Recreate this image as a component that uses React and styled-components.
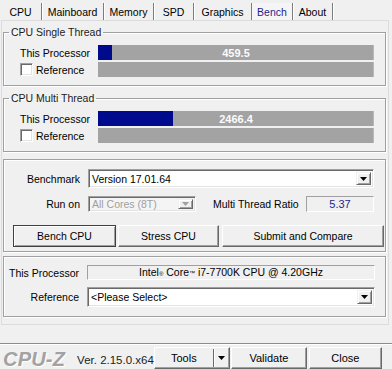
import React from "react";
import styled, { createGlobalStyle, css } from "styled-components";

const GlobalStyle = createGlobalStyle`
  html, body { margin: 0; padding: 0; background: #f0f0f0; }
  body {
    font-family: "Liberation Sans", Arial, sans-serif;
    font-size: 10.5px;
    color: #000;
  }
`;

const BAR_MAX = 9070;

const tabs = [
  { name: "CPU", w: 42 },
  { name: "Mainboard", w: 62 },
  { name: "Memory", w: 50 },
  { name: "SPD", w: 40 },
  { name: "Graphics", w: 58 },
  { name: "Bench", w: 41, active: true },
  { name: "About", w: 40 },
];

const Window = styled.div`
  width: 392px;
  height: 369px;
  overflow: hidden;
  display: flex;
  flex-direction: column;
  background: #f0f0f0;
`;

const TabStrip = styled.div`
  display: flex;
  height: 20px;
  flex-shrink: 0;
`;

const Tab = styled.div`
  width: ${(p) => p.$w}px;
  box-sizing: border-box;
  margin-top: 3px;
  padding-top: 3px;
  line-height: 13px;
  text-align: center;
  border-right: 1px solid #7d7d7d;
  box-shadow: 1px 0 0 #fff;
  color: ${(p) => (p.$active ? "#1d1d8c" : "#000")};
  background: ${(p) => (p.$active ? "#f5f5f5" : "transparent")};
`;

const Panel = styled.div`
  margin: 0 3px 0 1px;
  padding: 0 2px 7px 1px;
  border: 1px solid #dcdcdc;
  flex-shrink: 0;
`;

const boxLook = css`
  border: 1px solid #a0a0a0;
  box-shadow: inset 1px 1px 0 #fff, 1px 1px 0 #fff;
`;

const Group = styled.fieldset`
  ${boxLook};
  margin: ${(p) => p.$mt}px 0 0 0;
  padding: 7px 11px 8px 5px;
  min-width: 0;
`;

const Legend = styled.legend`
  padding: 0 2px;
  line-height: 12px;
  color: #1a1a1a;
`;

const Frame = styled.div`
  ${boxLook};
  margin-top: ${(p) => p.$mt}px;
  padding: ${(p) => p.$pad};
`;

const BarRows = styled.div`
  display: flex;
  flex-direction: column;
  gap: 2px;
  padding-left: 11px;
`;

const BarRow = styled.div`
  display: flex;
  align-items: center;
  height: 15px;
`;

const RowLabel = styled.div`
  width: 78px;
  flex-shrink: 0;
  display: flex;
  align-items: center;
`;

const Checkbox = styled.span`
  width: 13px;
  height: 13px;
  box-sizing: border-box;
  margin-right: 3px;
  background: #fff;
  border: 1px solid;
  border-color: #a0a0a0 #fff #fff #a0a0a0;
  box-shadow: inset 1px 1px 0 #696969, inset -1px -1px 0 #e3e3e3;
`;

const Bar = styled.div`
  flex: 1;
  height: 15px;
  position: relative;
  background: #a3a3a3;
  box-shadow: inset -1px 0 0 #b9b9b9;
  display: flex;
  align-items: center;
  justify-content: center;
`;

const BarFill = styled.div`
  position: absolute;
  left: 0;
  top: 0;
  bottom: 0;
  background: #000a8c;
`;

const BarValue = styled.span`
  position: relative;
  color: #fbfbfb;
  font-weight: bold;
  font-size: 11px;
`;

const FormRow = styled.div`
  display: flex;
  align-items: center;
  margin-top: ${(p) => p.$mt || 0}px;
`;

const FormLabel = styled.div`
  width: ${(p) => p.$w}px;
  flex-shrink: 0;
  text-align: right;
  margin-right: 8px;
`;

const Combo = styled.div`
  display: flex;
  align-items: center;
  box-sizing: border-box;
  width: ${(p) => (p.$w ? `${p.$w}px` : "auto")};
  flex: ${(p) => (p.$w ? "none" : "1")};
  height: ${(p) => p.$h}px;
  background: ${(p) => (p.$disabled ? "#f4f4f4" : "#fff")};
  color: ${(p) => (p.$disabled ? "#a0a0a0" : "#000")};
  border: 1px solid;
  border-color: #a0a0a0 #fff #fff #a0a0a0;
  box-shadow: inset 1px 1px 0 #696969, inset -1px -1px 0 #e3e3e3;
  padding: 2px 2px 2px 3px;
`;

const ComboText = styled.span`
  flex: 1;
  white-space: nowrap;
`;

const DropButton = styled.span`
  width: 15px;
  height: 100%;
  box-sizing: border-box;
  display: flex;
  align-items: center;
  justify-content: center;
  background: #f0f0f0;
  border: 1px solid;
  border-color: #f0f0f0 #696969 #696969 #f0f0f0;
  box-shadow: inset 1px 1px 0 #fff, inset -1px -1px 0 #a0a0a0;
`;

const Field = styled.div`
  box-sizing: border-box;
  width: ${(p) => (p.$w ? `${p.$w}px` : "auto")};
  flex: ${(p) => (p.$w ? "none" : "1")};
  height: ${(p) => p.$h}px;
  line-height: ${(p) => p.$h - 2}px;
  text-align: center;
  color: ${(p) => p.$color || "#000"};
  font-size: ${(p) => p.$fs || 10.5}px;
  background: #f0f0f0;
  border: 1px solid;
  border-color: #a0a0a0 #fff #fff #a0a0a0;
  white-space: nowrap;
`;

const Tiny = styled.span`
  font-size: 6px;
  vertical-align: ${(p) => p.$va};
`;

const RatioLabel = styled.div`
  margin-left: 17px;
  width: 93px;
`;

const ButtonRow = styled.div`
  display: flex;
  margin-top: ${(p) => p.$mt || 0}px;
  margin-left: ${(p) => p.$ml || 0}px;
  margin-right: ${(p) => p.$mr || 0}px;
`;

const Button = styled.button`
  font: inherit;
  font-size: ${(p) => p.$fs || 10.5}px;
  color: #000;
  width: ${(p) => p.$w}px;
  height: 22px;
  margin-left: ${(p) => p.$gap || 0}px;
  padding: 0;
  box-sizing: border-box;
  background: #f0f0f0;
  border: 1px solid;
  border-color: ${(p) => (p.$default ? "#404040" : "#fff #696969 #696969 #fff")};
  box-shadow: ${(p) =>
    p.$default
      ? "inset 1px 1px 0 #fff, inset -1px -1px 0 #a0a0a0"
      : "inset -1px -1px 0 #a0a0a0"};
  display: flex;
  align-items: center;
  justify-content: center;
`;

const SplitText = styled.span`
  flex: 1;
  text-align: center;
  border-right: 1px solid #696969;
  box-shadow: 1px 0 0 #fff;
  line-height: 18px;
`;

const SplitArrow = styled.span`
  width: 15px;
  display: flex;
  justify-content: center;
`;

const Footer = styled.div`
  margin-top: auto;
  height: 26px;
  box-sizing: border-box;
  flex-shrink: 0;
  border-top: 1px solid #8c8c8c;
  box-shadow: inset 0 1px 0 #fff;
  display: flex;
  align-items: flex-start;
`;

const Logo = styled.div`
  margin: 5px 0 0 3px;
  font-size: 20px;
  line-height: 20px;
  font-weight: bold;
  font-style: italic;
  color: #a2a2a2;
  text-shadow: 1px 1px 0 #fff;
  letter-spacing: 0.2px;
`;

const Version = styled.div`
  margin: 10px 0 0 12px;
  font-size: 11.5px;
  line-height: 13px;
  color: #222;
`;

function Arrow({ color = "#000" }) {
  return (
    <svg width="7" height="4" viewBox="0 0 7 4">
      <path d="M0 0h7L3.5 4z" fill={color} />
    </svg>
  );
}

function ScoreBox({ title, mt, value }) {
  return (
    <Group $mt={mt}>
      <Legend>{title}</Legend>
      <BarRows>
        <BarRow>
          <RowLabel>This Processor</RowLabel>
          <Bar>
            <BarFill style={{ width: `${(value / BAR_MAX) * 100}%` }} />
            <BarValue>{value.toFixed(1)}</BarValue>
          </Bar>
        </BarRow>
        <BarRow>
          <RowLabel>
            <Checkbox />
            Reference
          </RowLabel>
          <Bar />
        </BarRow>
      </BarRows>
    </Group>
  );
}

export default function App() {
  return (
    <Window>
      <GlobalStyle />
      <TabStrip>
        {tabs.map((t) => (
          <Tab key={t.name} $w={t.w} $active={t.active}>
            {t.name}
          </Tab>
        ))}
      </TabStrip>

      <Panel>
        <ScoreBox title="CPU Single Thread" mt={5} value={459.5} />
        <ScoreBox title="CPU Multi Thread" mt={6} value={2466.4} />

        <Frame $mt={7} $pad="9px 1px 4px 9px">
          <FormRow>
            <FormLabel $w={67}>Benchmark</FormLabel>
            <Combo $w={286} $h={19}>
              <ComboText>Version 17.01.64</ComboText>
              <DropButton>
                <Arrow />
              </DropButton>
            </Combo>
          </FormRow>
          <FormRow $mt={8}>
            <FormLabel $w={67}>Run on</FormLabel>
            <Combo $w={108} $h={16} $disabled>
              <ComboText>All Cores (8T)</ComboText>
              <DropButton>
                <Arrow color="#a0a0a0" />
              </DropButton>
            </Combo>
            <RatioLabel>Multi Thread Ratio</RatioLabel>
            <Field $w={68} $h={16} $color="#1f2590" $fs={11}>
              5.37
            </Field>
          </FormRow>
          <ButtonRow $mt={13}>
            <Button $w={103} $default>
              Bench CPU
            </Button>
            <Button $w={101} $gap={2}>
              Stress CPU
            </Button>
            <Button $w={162} $gap={3}>
              Submit and Compare
            </Button>
          </ButtonRow>
        </Frame>

        <Frame $mt={4} $pad="8px 10px 9px 0">
          <FormRow>
            <FormLabel $w={75}>This Processor</FormLabel>
            <Field $h={15}>
              Intel<Tiny $va="baseline">®</Tiny> Core<Tiny $va="middle">™</Tiny> i7-7700K CPU @ 4.20GHz
            </Field>
          </FormRow>
          <FormRow $mt={7}>
            <FormLabel $w={75}>Reference</FormLabel>
            <Combo $h={20}>
              <ComboText>&lt;Please Select&gt;</ComboText>
              <DropButton>
                <Arrow />
              </DropButton>
            </Combo>
          </FormRow>
        </Frame>
      </Panel>

      <Footer>
        <Logo>CPU-Z</Logo>
        <Version>Ver. 2.15.0.x64</Version>
        <ButtonRow $mt={3} $ml={"auto"} $mr={1}>
          <Button $w={76} $fs={11}>
            <SplitText>Tools</SplitText>
            <SplitArrow>
              <Arrow />
            </SplitArrow>
          </Button>
          <Button $w={76} $gap={1} $fs={11}>
            Validate
          </Button>
          <Button $w={73} $gap={2} $fs={11}>
            Close
          </Button>
        </ButtonRow>
      </Footer>
    </Window>
  );
}
